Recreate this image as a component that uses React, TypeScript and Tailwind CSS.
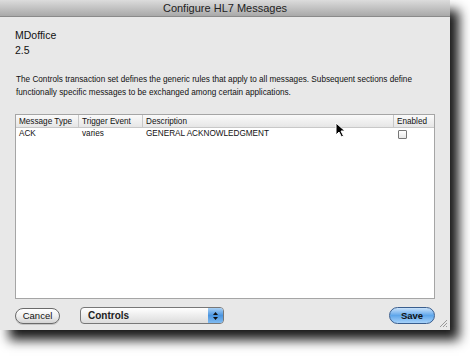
import React from "react";

const font = { fontFamily: '"Liberation Sans", "DejaVu Sans", sans-serif' };

function Cursor() {
  return (
    <svg className="absolute left-[335px] top-[122px]" width="12" height="16" viewBox="0 0 12 16">
      <path d="M1 1 L1 13 L4 10 L6.5 15 L8.5 14 L6 9 L10 9 Z" fill="#000" stroke="#fff" strokeWidth="1" />
    </svg>
  );
}

export default function App() {
  return (
    <div className="w-[470px] h-[359px] bg-white relative overflow-hidden" style={font}>
      <div className="relative w-[450px] h-[330px] bg-[#e8e8e8] flex flex-col shadow-[9px_10px_11px_rgba(0,0,0,0.9)]">
        {/* title bar */}
        <div className="h-[17px] flex items-center justify-center bg-gradient-to-b from-[#dcdcdc] to-[#a9a9a9] border-b border-[#8a8a8a]">
          <span className="text-[11px] text-[#222] leading-[16px]">Configure HL7 Messages</span>
        </div>

        <div className="flex flex-col px-[15px] pt-[11px]">
          <div className="text-[10.5px] text-[#111] leading-[15px]">MDoffice</div>
          <div className="text-[10.5px] text-[#111] leading-[15px]">2.5</div>

          <p className="mt-[15px] text-[8.2px] leading-[13px] text-[#111] pl-[1px] whitespace-nowrap">
            The Controls transaction set defines the generic rules that apply to all messages. Subsequent sections define
            <br />
            functionally specific messages to be exchanged among certain applications.
          </p>

          {/* table */}
          <div className="mt-[15px] w-[420px] h-[185px] bg-white border border-[#a5a5a5] flex flex-col text-[8.2px] text-[#111] whitespace-nowrap">
            <div className="h-[13px] flex border-b border-[#c8c8c8] bg-gradient-to-b from-[#fafafa] to-[#e6e6e6]">
              <div className="w-[63px] pl-[3px] border-r border-[#c8c8c8] leading-[13px]">Message Type</div>
              <div className="w-[64px] pl-[3px] border-r border-[#c8c8c8] leading-[13px]">Trigger Event</div>
              <div className="w-[251px] pl-[3px] border-r border-[#c8c8c8] leading-[13px]">Description</div>
              <div className="flex-1 pl-[3px] leading-[13px]">Enabled</div>
            </div>
            <div className="h-[12px] flex leading-[12px]">
              <div className="w-[63px] pl-[3px]">ACK</div>
              <div className="w-[64px] pl-[3px]">varies</div>
              <div className="w-[251px] pl-[3px]">GENERAL ACKNOWLEDGMENT</div>
              <div className="flex-1 pl-[4px] flex items-center">
                <div className="w-[9px] h-[9px] border border-[#777] rounded-[1px] bg-gradient-to-b from-white to-[#e8e8e8]" />
              </div>
            </div>
          </div>

          {/* buttons */}
          <div className="mt-[8px] flex items-center">
            <button className="w-[45px] h-[16px] rounded-full border border-[#6a6a6a] bg-gradient-to-b from-white via-[#f0f0f0] to-[#d4d4d4] text-[9.5px] text-[#111] leading-[14px] shadow-[0_1px_0_rgba(0,0,0,0.15)]">
              Cancel
            </button>
            <div className="ml-[20px] w-[144px] h-[17px] rounded-[4px] border border-[#777] bg-gradient-to-b from-white to-[#dcdcdc] flex items-center">
              <span className="flex-1 pl-[7px] text-[10px] font-bold text-[#222] leading-[15px]">Controls</span>
              <div className="w-[15px] h-[15px] rounded-r-[3px] bg-gradient-to-b from-[#a8d0f4] via-[#4a95e0] to-[#7fbaf0] flex flex-col items-center justify-center gap-[2px]">
                <svg width="5" height="3" viewBox="0 0 5 3"><path d="M0 3 L2.5 0 L5 3 Z" fill="#111" /></svg>
                <svg width="5" height="3" viewBox="0 0 5 3"><path d="M0 0 L2.5 3 L5 0 Z" fill="#111" /></svg>
              </div>
            </div>
            <div className="flex-1" />
            <button className="w-[46px] h-[17px] rounded-full border border-[#3a5e8e] bg-gradient-to-b from-[#c9e2fa] via-[#5ea6ea] to-[#a6d2fa] text-[9.5px] font-bold text-[#111] leading-[15px]">
              Save
            </button>
          </div>
        </div>

        {/* resize grip */}
        <svg className="absolute right-[2px] bottom-[2px]" width="9" height="9" viewBox="0 0 9 9">
          <path d="M8 1 L1 8 M8 4 L4 8 M8 7 L7 8" stroke="#999" strokeWidth="1" />
        </svg>
      </div>
      <Cursor />
    </div>
  );
}
